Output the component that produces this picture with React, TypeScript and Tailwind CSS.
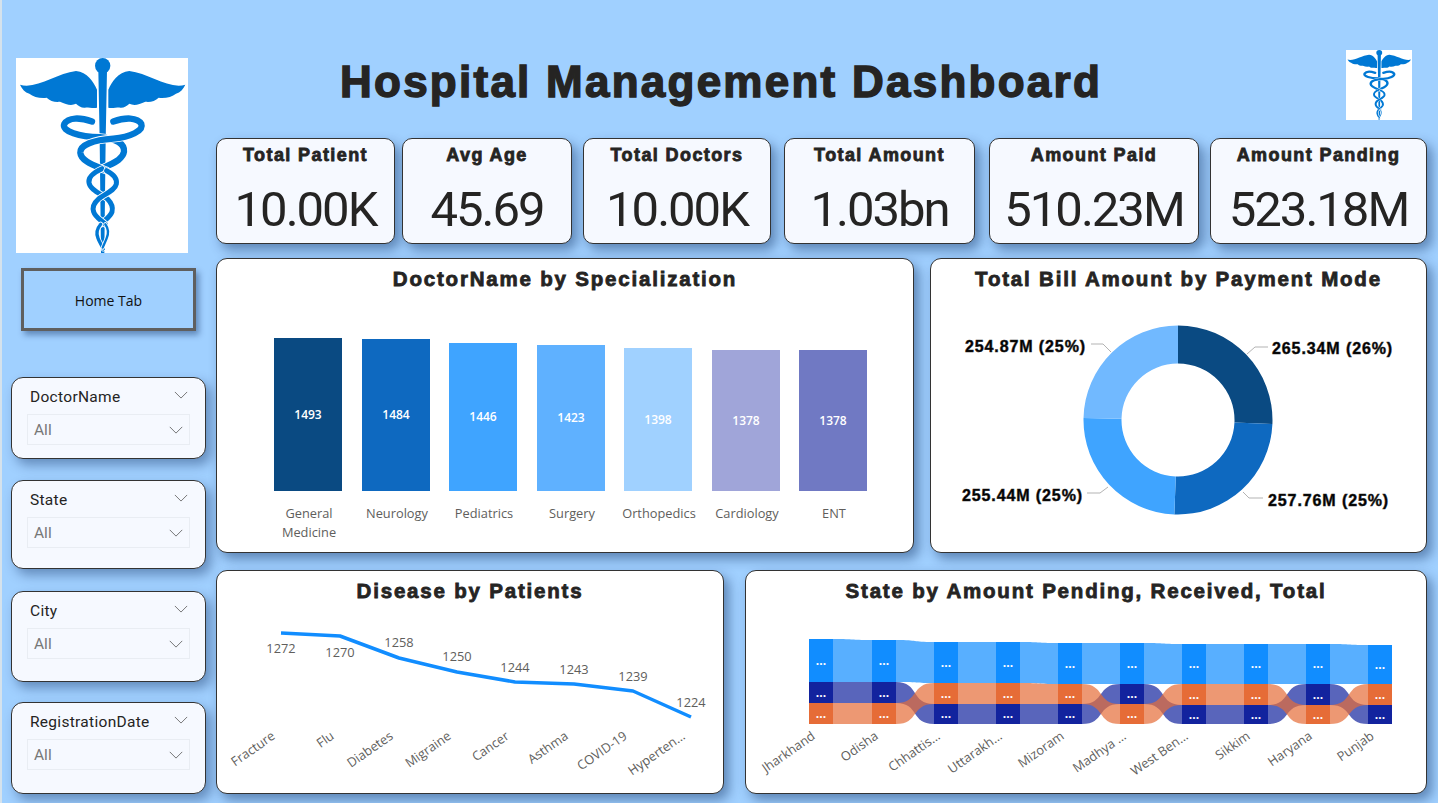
const title = "font-[family-name:'Liberation_Sans',Arial,sans-serif] font-bold [-webkit-text-stroke:0.8px_#252423] text-[#252423]";
const din = "font-[family-name:Roboto,sans-serif]";

const kpis = [
  { label: 'Total Patient', value: '10.00K', box: 'w-[179px]' },
  { label: 'Avg Age', value: '45.69', box: 'w-[170px] ml-[7px]' },
  { label: 'Total Doctors', value: '10.00K', box: 'w-[188px] ml-[11px]' },
  { label: 'Total Amount', value: '1.03bn', box: 'w-[191px] ml-[13px]' },
  { label: 'Amount Paid', value: '510.23M', box: 'w-[210px] ml-[14px]' },
  { label: 'Amount Panding', value: '523.18M', box: 'w-[217px] ml-[11px]' },
];

const slicers = [
  { name: 'DoctorName', box: 'h-[82px] mt-[46px]' },
  { name: 'State', box: 'h-[89px] mt-[21px]' },
  { name: 'City', box: 'h-[91px] mt-[22px]' },
  { name: 'RegistrationDate', box: 'h-[92px] mt-[20px]' },
];

const bars = [
  { x: 274, top: 338, color: '#0a4a82', value: 1493, name: ['General', 'Medicine'] },
  { x: 362, top: 339, color: '#0e69c0', value: 1484, name: ['Neurology'] },
  { x: 449, top: 343, color: '#3fa4ff', value: 1446, name: ['Pediatrics'] },
  { x: 537, top: 345, color: '#5fb1ff', value: 1423, name: ['Surgery'] },
  { x: 624, top: 348, color: '#a0d1ff', value: 1398, name: ['Orthopedics'] },
  { x: 712, top: 350, color: '#a0a5d9', value: 1378, name: ['Cardiology'] },
  { x: 799, top: 350, color: '#7079c3', value: 1378, name: ['ENT'] },
];

const payments = [
  { value: 265.34, color: '#0a4a82' },
  { value: 257.76, color: '#0e69c0' },
  { value: 255.44, color: '#3fa4ff' },
  { value: 254.87, color: '#71b9ff' },
];

const donutLabels = [
  { text: '265.34M (26%)', x: 1272, y: 349, anchor: 'start', line: '1247,354 1255,347 1268,347' },
  { text: '257.76M (25%)', x: 1268, y: 501, anchor: 'start', line: '1243,492 1249,498 1263,498' },
  { text: '255.44M (25%)', x: 1083, y: 496, anchor: 'end', line: '1108,487 1100,493 1087,493' },
  { text: '254.87M (25%)', x: 1086, y: 347, anchor: 'end', line: '1111,352 1103,344 1091,344' },
];

const diseases = [
  { x: 281, y: 633, value: 1272, ly: 649, name: 'Fracture' },
  { x: 340, y: 636, value: 1270, ly: 653, name: 'Flu' },
  { x: 399, y: 658, value: 1258, ly: 643, name: 'Diabetes' },
  { x: 457, y: 672, value: 1250, ly: 657, name: 'Migraine' },
  { x: 515, y: 682, value: 1244, ly: 668, name: 'Cancer' },
  { x: 574, y: 684, value: 1243, ly: 670, name: 'Asthma' },
  { x: 633, y: 691, value: 1239, ly: 677, name: 'COVID-19' },
  { x: 691, y: 717, value: 1224, ly: 703, name: 'Hyperten...' },
];

// y: top of blue, blue/middle edge, middle split. n = navy on top of the middle pair
const ribbonCols = [
  { x: 809, top: 639, a: 682, b: 703, n: true, name: 'Jharkhand' },
  { x: 872, top: 640, a: 682, b: 703, n: true, name: 'Odisha' },
  { x: 934, top: 642, a: 683, b: 704, n: false, name: 'Chhattis...' },
  { x: 996, top: 642, a: 683, b: 704, n: false, name: 'Uttarakh...' },
  { x: 1058, top: 643, a: 684, b: 704, n: false, name: 'Mizoram' },
  { x: 1120, top: 643, a: 684, b: 704, n: true, name: 'Madhya ...' },
  { x: 1182, top: 644, a: 684, b: 705, n: false, name: 'West Ben...' },
  { x: 1244, top: 644, a: 684, b: 705, n: false, name: 'Sikkim' },
  { x: 1306, top: 644, a: 684, b: 705, n: true, name: 'Haryana' },
  { x: 1368, top: 645, a: 684, b: 705, n: false, name: 'Punjab' },
];
const BOTTOM = 724;
const NAVY = '#12239e';
const ORANGE = '#e66c37';
const BLUE = '#118dff';

function ribbon(x1: number, t1: number, b1: number, x2: number, t2: number, b2: number) {
  const c = (x2 - x1) * 0.62;
  return `M${x1} ${t1}C${x1 + c} ${t1} ${x2 - c} ${t2} ${x2} ${t2}L${x2} ${b2}C${x2 - c} ${b2} ${x1 + c} ${b1} ${x1} ${b1}Z`;
}

function arc(start: number, end: number, R: number, r: number, cx: number, cy: number) {
  const p = (a: number, d: number) => `${cx + d * Math.sin(a)} ${cy - d * Math.cos(a)}`;
  const large = end - start > Math.PI ? 1 : 0;
  return `M${p(start, R)}A${R} ${R} 0 ${large} 1 ${p(end, R)}L${p(end, r)}A${r} ${r} 0 ${large} 0 ${p(start, r)}Z`;
}

function Caduceus({ className }: { className: string }) {
  const snakes = [
    { d: 'M276 245C240 232 205 232 193 252C183 275 240 290 300 292C350 296 374 312 372 335C368 362 330 372 306 386', w: 19 },
    { d: 'M340 245C376 232 412 232 424 252C432 272 390 292 340 296C280 300 240 315 241 338C243 365 290 378 320 392', w: 19 },
    { d: 'M306 386C275 400 264 412 267 428C270 450 305 462 322 476C336 490 340 500 336 515C330 532 312 540 302 552', w: 15 },
    { d: 'M320 392C340 402 352 415 349 432C345 452 312 462 296 476C282 488 276 500 281 515C286 532 305 540 316 552', w: 15 },
    { d: 'M302 552C290 566 288 580 294 594C298 606 305 614 310 626', w: 10 },
    { d: 'M316 552C326 566 326 580 320 594C316 604 312 612 308 622', w: 7 },
  ];
  return (
    <svg viewBox="48 55 516 583" preserveAspectRatio="none" className={className}>
      <rect x="48" y="55" width="516" height="583" fill="#fff" />
      <g fill="#0078d4">
        <circle cx="308" cy="78" r="23" />
        <path d="M295 92L321 92L317 300L313 638L303 638L299 300Z" />
        <path d="M60 135C110 150 170 100 228 94C262 98 280 125 291 150L291 204C280 206 268 203 258 203C248 206 236 200 228 192C216 198 200 196 180 186C165 188 150 184 140 174C120 176 100 172 88 162C75 158 66 148 60 135Z" />
        <path d="M556 135C506 150 446 100 388 94C354 98 336 125 325 150L325 204C336 206 348 203 358 203C368 206 380 200 388 192C400 198 416 196 436 186C451 188 466 184 476 174C496 176 516 172 528 162C541 158 550 148 556 135Z" />
      </g>
      {snakes.map((s) => (
        <g key={s.d} fill="none" strokeLinecap="round">
          <path d={s.d} stroke="#fff" strokeWidth={s.w + 5} />
          <path d={s.d} stroke="#0078d4" strokeWidth={s.w} />
        </g>
      ))}
    </svg>
  );
}

function Chevron({ className }: { className: string }) {
  return (
    <svg viewBox="0 0 16 9" className={className} fill="none" stroke="#666" strokeWidth="1">
      <path d="M1 1L8 8L15 1" />
    </svg>
  );
}

function Panel({ name, box, children }: { name: string; box: string; children: React.ReactNode }) {
  return (
    <div className={`${box} h-full rounded-[11px] border border-[#333] bg-white shadow-[5px_6px_12px_rgba(0,30,80,0.42)] overflow-hidden`}>
      <p className={`${title} h-[40px] pt-[6px] text-center text-[20.5px] leading-[28px] tracking-[1.8px]`}>{name}</p>
      {children}
    </div>
  );
}

export default function App() {
  const total = payments.reduce((s, p) => s + p.value, 0);
  let angle = 0;

  return (
    <div className="flex h-[803px] w-[1438px] overflow-hidden border-l-2 border-[#d5e2ec] bg-[#a0d0ff] font-[family-name:'Open_Sans',sans-serif]">
      <div className="w-[214px] shrink-0 pt-[58px]">
        <Caduceus className="ml-[14px] block h-[195px] w-[172px]" />
        <div className="ml-[19px] mt-[15px] flex h-[63px] w-[175px] items-center justify-center border-[3px] border-[#5f5f5f] pt-[2px] text-[14px] text-[#111] shadow-[3px_4px_6px_rgba(0,30,80,0.4)]">
          Home Tab
        </div>
        {slicers.map((s) => (
          <div key={s.name} className={`${s.box} ml-[9px] w-[195px] rounded-[12px] border border-[#333] bg-[#f6f9ff] px-[15px] shadow-[5px_6px_12px_rgba(0,30,80,0.38)]`}>
            <div className={`${din} flex h-[36px] items-center justify-between pl-[3px] pr-[2px] pt-[3px] text-[15.5px] tracking-[0.3px] text-[#252423]`}>
              {s.name}
              <Chevron className="mb-[6px] h-[8px] w-[14px]" />
            </div>
            <div className={`${din} flex h-[31px] items-center justify-between border border-[#e9edf3] pl-[6px] pr-[5px] pt-[3px] text-[15.5px] text-[#777]`}>
              All
              <Chevron className="mb-[3px] h-[8px] w-[16px]" />
            </div>
          </div>
        ))}
      </div>

      <div className="flex-1">
        <div className="flex h-[138px]">
          <h1 className={`${title} ml-[124px] pt-[52px] text-[44px] leading-[60px] tracking-[2.25px] [-webkit-text-stroke:1.4px_#252423] whitespace-nowrap`}>
            Hospital Management Dashboard
          </h1>
          <Caduceus className="ml-auto mr-[26px] mt-[50px] block h-[70px] w-[66px]" />
        </div>

        <div className="flex h-[106px]">
          {kpis.map((k) => (
            <div key={k.label} className={`${k.box} flex flex-col items-center rounded-[10px] border border-[#333] bg-[#f6f9ff] shadow-[5px_6px_12px_rgba(0,30,80,0.42)]`}>
              <p className={`${title} mt-[3px] text-[18px] leading-[26px] tracking-[1.4px] [-webkit-text-stroke:0.6px_#252423]`}>{k.label}</p>
              <p className={`${din} mt-[14px] text-[49px] leading-[56px] tracking-[-2px] text-[#252423]`}>{k.value}</p>
            </div>
          ))}
        </div>

        <div className="mt-[14px] flex h-[295px]">
          <Panel name="DoctorName by Specialization" box="w-[698px]">
            <svg viewBox="217 299 696 253" className="block h-[253px] w-[696px]">
              {bars.map((b) => (
                <g key={b.x}>
                  <rect x={b.x} y={b.top} width="68" height={491 - b.top} fill={b.color} />
                  <text x={b.x + 34} y={(b.top + 491) / 2 + 4} textAnchor="middle" fill="#fff" fontSize="12" fontWeight="600">{b.value}</text>
                  {b.name.map((n, i) => (
                    <text key={n} x={b.x + 35} y={518 + i * 19} textAnchor="middle" fill="#605e5c" fontSize="12.8">{n}</text>
                  ))}
                </g>
              ))}
            </svg>
          </Panel>
          <Panel name="Total Bill Amount by Payment Mode" box="ml-[16px] w-[497px]">
            <svg viewBox="931 299 495 253" className="block h-[253px] w-[495px]">
              {payments.map((p) => {
                const start = angle;
                angle += (p.value / total) * Math.PI * 2;
                return <path key={p.color} d={arc(start, angle, 94.5, 56.5, 1178, 420)} fill={p.color} />;
              })}
              {donutLabels.map((l) => (
                <g key={l.text}>
                  <polyline points={l.line} fill="none" stroke="#b3b3b3" />
                  <text x={l.x} y={l.y + 5} textAnchor={l.anchor as 'start' | 'end'} fontSize="16" letterSpacing="0.9" strokeWidth="0.5" stroke="#252423" className={title}>{l.text}</text>
                </g>
              ))}
            </svg>
          </Panel>
        </div>

        <div className="mt-[17px] flex h-[224px]">
          <Panel name="Disease by Patients" box="w-[508px]">
            <svg viewBox="217 611 506 182" className="block h-[182px] w-[506px]">
              <polyline points={diseases.map((d) => `${d.x},${d.y}`).join(' ')} fill="none" stroke={BLUE} strokeWidth="3.5" strokeLinejoin="round" />
              {diseases.map((d) => (
                <g key={d.name} fill="#605e5c" fontSize="12.8">
                  <text x={d.x} y={d.ly + 4} textAnchor="middle">{d.value}</text>
                  <text x={d.x - 5} y={738} textAnchor="end" transform={`rotate(-35 ${d.x - 5} 738)`}>{d.name}</text>
                </g>
              ))}
            </svg>
          </Panel>
          <Panel name="State by Amount Pending, Received, Total" box="ml-[21px] w-[682px]">
            <svg viewBox="746 611 680 182" className="block h-[182px] w-[680px]">
              {ribbonCols.slice(0, -1).map((c, i) => {
                const n = ribbonCols[i + 1];
                const x1 = c.x + 24;
                const x2 = n.x;
                const navy1 = c.n ? [c.a, c.b] : [c.b, BOTTOM];
                const navy2 = n.n ? [n.a, n.b] : [n.b, BOTTOM];
                const orange1 = c.n ? [c.b, BOTTOM] : [c.a, c.b];
                const orange2 = n.n ? [n.b, BOTTOM] : [n.a, n.b];
                return (
                  <g key={c.x} fillOpacity="0.7">
                    <path d={ribbon(x1, c.top, c.a, x2, n.top, n.a)} fill={BLUE} />
                    <path d={ribbon(x1, navy1[0], navy1[1], x2, navy2[0], navy2[1])} fill={NAVY} />
                    <path d={ribbon(x1, orange1[0], orange1[1], x2, orange2[0], orange2[1])} fill={ORANGE} />
                  </g>
                );
              })}
              {ribbonCols.map((c) => {
                const segs = [
                  { y: c.top, h: c.a - c.top, fill: BLUE },
                  { y: c.a, h: c.b - c.a, fill: c.n ? NAVY : ORANGE },
                  { y: c.b, h: BOTTOM - c.b, fill: c.n ? ORANGE : NAVY },
                ];
                return (
                  <g key={c.x}>
                    {segs.map((s) => (
                      <g key={s.y}>
                        <rect x={c.x} y={s.y} width="24" height={s.h} fill={s.fill} />
                        <text x={c.x + 12} y={s.y + s.h / 2 + 4} textAnchor="middle" fill="#fff" fontSize="12" fontWeight="700">...</text>
                      </g>
                    ))}
                    <text x={c.x + 7} y={738} textAnchor="end" fill="#605e5c" fontSize="12.8" transform={`rotate(-35 ${c.x + 7} 738)`}>{c.name}</text>
                  </g>
                );
              })}
            </svg>
          </Panel>
        </div>
      </div>
    </div>
  );
}
